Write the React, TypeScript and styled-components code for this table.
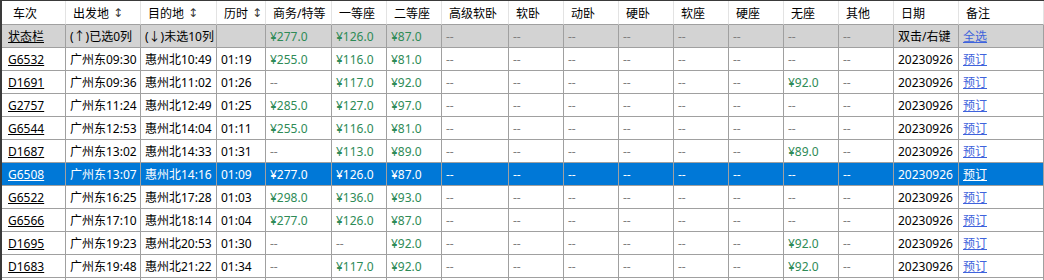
import styled, { createGlobalStyle } from 'styled-components'

const GlobalStyle = createGlobalStyle`
  html, body {
    margin: 0;
    padding: 0;
    background: #fff;
  }
  body {
    font-family: "Noto Sans", "Noto Sans CJK SC", sans-serif;
    font-size: 12px;
    color: #000;
    overflow: hidden;
  }
`

const headers = [
  { label: '车次' },
  { label: '出发地', sort: true },
  { label: '目的地', sort: true },
  { label: '历时', sort: true },
  { label: '商务/特等' },
  { label: '一等座' },
  { label: '二等座' },
  { label: '高级软卧' },
  { label: '软卧' },
  { label: '动卧' },
  { label: '硬卧' },
  { label: '软座' },
  { label: '硬座' },
  { label: '无座' },
  { label: '其他' },
  { label: '日期' },
  { label: '备注' },
]

type Train = {
  code: string
  from: string
  to: string
  dur: string
  biz: string
  first: string
  second: string
  noSeat: string
}

const trains: Train[] = [
  { code: 'G6532', from: '广州东09:30', to: '惠州北10:49', dur: '01:19', biz: '¥255.0', first: '¥116.0', second: '¥81.0', noSeat: '--' },
  { code: 'D1691', from: '广州东09:36', to: '惠州北11:02', dur: '01:26', biz: '--', first: '¥117.0', second: '¥92.0', noSeat: '¥92.0' },
  { code: 'G2757', from: '广州东11:24', to: '惠州北12:49', dur: '01:25', biz: '¥285.0', first: '¥127.0', second: '¥97.0', noSeat: '--' },
  { code: 'G6544', from: '广州东12:53', to: '惠州北14:04', dur: '01:11', biz: '¥255.0', first: '¥116.0', second: '¥81.0', noSeat: '--' },
  { code: 'D1687', from: '广州东13:02', to: '惠州北14:33', dur: '01:31', biz: '--', first: '¥113.0', second: '¥89.0', noSeat: '¥89.0' },
  { code: 'G6508', from: '广州东13:07', to: '惠州北14:16', dur: '01:09', biz: '¥277.0', first: '¥126.0', second: '¥87.0', noSeat: '--' },
  { code: 'G6522', from: '广州东16:25', to: '惠州北17:28', dur: '01:03', biz: '¥298.0', first: '¥136.0', second: '¥93.0', noSeat: '--' },
  { code: 'G6566', from: '广州东17:10', to: '惠州北18:14', dur: '01:04', biz: '¥277.0', first: '¥126.0', second: '¥87.0', noSeat: '--' },
  { code: 'D1695', from: '广州东19:23', to: '惠州北20:53', dur: '01:30', biz: '--', first: '--', second: '¥92.0', noSeat: '¥92.0' },
  { code: 'D1683', from: '广州东19:48', to: '惠州北21:22', dur: '01:34', biz: '--', first: '¥117.0', second: '¥92.0', noSeat: '¥92.0' },
]

const SELECTED = 'G6508'

const Frame = styled.div`
  border-top: 1px solid #3a3a3a;
  border-left: 2px solid #3a3a3a;
  width: 1042px;
`

const Grid = styled.div`
  display: grid;
  grid-template-columns: 64px 75px 76px 49px 66px 55px 55px 67px 55px 55px 55px 55px 55px 55px 55px 65px 1fr;
`

const HeadCell = styled.div<{ $first?: boolean }>`
  height: 24px;
  box-sizing: border-box;
  display: flex;
  align-items: center;
  padding-left: ${p => (p.$first ? '11px' : '7px')};
  border-right: 1px solid #e3e3e3;
  border-bottom: 1px solid #a0a0a0;
  background: #fff;
  white-space: nowrap;
  overflow: hidden;
`

const SortMark = styled.span`
  margin-left: 4px;
  font-family: "DejaVu Sans", sans-serif;
  font-size: 12px;
  color: #3a3a3a;
`

const Row = styled.div<{ $bg: string }>`
  display: contents;
  & > div {
    background: ${p => p.$bg};
  }
`

type Tone = 'plain' | 'price' | 'dash' | 'link' | 'code'

const Cell = styled.div<{ $tone: Tone; $first?: boolean; $inv?: boolean }>`
  height: 23px;
  box-sizing: border-box;
  display: flex;
  align-items: center;
  padding-left: ${p => (p.$first ? '6px' : '4px')};
  border-right: 1px solid #a0a0a0;
  border-bottom: 1px solid #a0a0a0;
  white-space: nowrap;
  overflow: hidden;
  color: ${p =>
    p.$inv
      ? '#fff'
      : p.$tone === 'price'
      ? '#2e8b57'
      : p.$tone === 'dash'
      ? '#808080'
      : p.$tone === 'link'
      ? '#3f63dc'
      : '#000'};
  text-decoration: ${p => (p.$tone === 'link' || p.$tone === 'code' ? 'underline' : 'none')};
`

const toneOf = (v: string): Tone => (v === '--' ? 'dash' : v.startsWith('¥') ? 'price' : 'plain')

const dashes = (n: number) => Array.from({ length: n }, () => '--')

export default function App() {
  const status = [
    '(↑)已选0列',
    '(↓)未选10列',
    '',
    '¥277.0',
    '¥126.0',
    '¥87.0',
    ...dashes(8),
    '双击/右键',
  ]
  return (
    <>
      <GlobalStyle />
      <Frame>
        <Grid>
          {headers.map((h, i) => (
            <HeadCell key={h.label} $first={i === 0}>
              {h.label}
              {h.sort && <SortMark>↕</SortMark>}
            </HeadCell>
          ))}

          <Row $bg="#d3d3d3">
            <Cell $tone="code" $first>状态栏</Cell>
            {status.map((v, i) => (
              <Cell key={i} $tone={toneOf(v)}>{v}</Cell>
            ))}
            <Cell $tone="link">全选</Cell>
          </Row>

          {trains.map(t => {
            const inv = t.code === SELECTED
            const values = [
              t.from,
              t.to,
              t.dur,
              t.biz,
              t.first,
              t.second,
              ...dashes(6),
              t.noSeat,
              '--',
              '20230926',
            ]
            return (
              <Row key={t.code} $bg={inv ? '#0078d7' : '#fff'}>
                <Cell $tone="code" $first $inv={inv}>{t.code}</Cell>
                {values.map((v, i) => (
                  <Cell key={i} $tone={toneOf(v)} $inv={inv}>{v}</Cell>
                ))}
                <Cell $tone="link" $inv={inv}>预订</Cell>
              </Row>
            )
          })}

          <Row $bg="#fff">
            {headers.map(h => (
              <Cell key={h.label} $tone="plain" />
            ))}
          </Row>
        </Grid>
      </Frame>
    </>
  )
}
